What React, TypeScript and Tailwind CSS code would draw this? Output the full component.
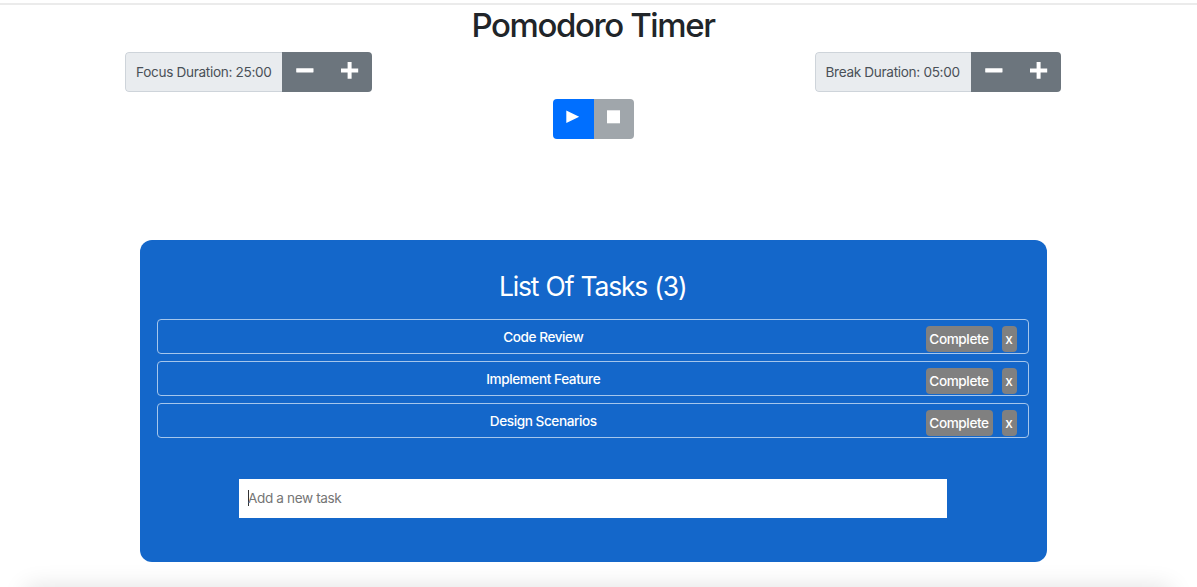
import React from "react";

type DurationProps = { label: string; width: string };

function Duration({ label, width }: DurationProps) {
  return (
    <div className={`flex h-[40.5px] overflow-hidden rounded-[4px] ${width}`}>
      <div className="flex flex-1 items-center rounded-l-[4px] border border-r-0 border-[#ced4da] bg-[#e9ecef] pl-[10px] text-[13.6px] tracking-[-0.32px] whitespace-nowrap text-[#495057]">
        {label}
      </div>
      <div className="flex w-[90px] bg-[#6c757d] text-white">
        <button aria-label="Decrease" className="flex w-[45px] pt-[10px] pl-[14px]">
          <svg width="18" height="18" viewBox="0 0 18 18" fill="currentColor">
            <rect x="0.2" y="6.2" width="17.3" height="4.3" rx="0.4" />
          </svg>
        </button>
        <button aria-label="Increase" className="flex w-[45px] pt-[10px] pl-[14px]">
          <svg width="18" height="18" viewBox="0 0 18 18" fill="currentColor">
            <path d="M6.6 0h4v6.4H17.2v4H10.6v6.4h-4v-6.4H0v-4H6.6z" />
          </svg>
        </button>
      </div>
    </div>
  );
}

function Task({ name }: { name: string }) {
  return (
    <li className="flex h-[35px] rounded-[4px] border border-[#a5c6ec] pr-[11px] text-[13.6px] font-[450] text-white">
      <span className="flex-1 pt-[7px] pl-[3px] text-center leading-5 tracking-[-0.43px]">{name}</span>
      <div className="flex gap-[9px] pt-[6px]">
        <button className="h-[26px] w-[67px] rounded-[4px] bg-[#808080] text-center tracking-[-0.4px]">
          Complete
        </button>
        <button className="h-[26px] w-[15px] rounded-[4px] bg-[#808080] text-center">x</button>
      </div>
    </li>
  );
}

export default function App() {
  const tasks = ["Code Review", "Implement Feature", "Design Scenarios"];
  return (
    <div className="relative flex h-[587px] w-full flex-col overflow-hidden bg-white font-['Inter','Liberation_Sans',sans-serif]">
      <div className="h-[5px] shrink-0 border-b-2 border-[#ebebeb]" />
      <main className="flex w-[1186px] flex-col">
        <h1 className="h-[46.5px] text-center text-[33px] leading-[41px] font-[550] tracking-[-1.4px] text-[#212529]">
          Pomodoro Timer
        </h1>
        <div className="flex justify-between pr-[125.5px] pl-[125px]">
          <Duration label="Focus Duration: 25:00" width="w-[247px]" />
          <Duration label="Break Duration: 05:00" width="w-[246px]" />
        </div>
        <div className="mt-[6.5px] ml-[553px] flex h-[40.5px] w-[81px] overflow-hidden rounded-[4px] text-white">
          <button aria-label="Play" className="flex w-[41px] bg-[#006fff] pt-[11.5px] pl-[13px]">
            <svg width="14" height="14" viewBox="0 0 14 14" fill="currentColor">
              <path d="M0.3 0.5L13.2 6.7L0.3 12.9z" />
            </svg>
          </button>
          <button aria-label="Stop" className="flex flex-1 bg-[#a0a6ab] pt-[11.5px] pl-[13px]">
            <svg width="14" height="14" viewBox="0 0 14 14" fill="currentColor">
              <rect width="13" height="13" y="0.3" />
            </svg>
          </button>
        </div>
        <section className="relative z-10 mt-[101px] ml-[140px] flex h-[322px] w-[906.5px] flex-col rounded-[12px] bg-[#1467ca] pr-[18px] pl-[17px]">
          <h2 className="h-[79px] pt-[29px] text-center text-[26.5px] leading-[34px] font-[430] tracking-[-1.2px] [word-spacing:1px] text-white">
            List Of Tasks (3)
          </h2>
          <ul className="flex flex-col gap-[7px]">
            {tasks.map((t) => (
              <Task key={t} name={t} />
            ))}
          </ul>
          <div className="mt-[41px] ml-[82px] flex h-[38.5px] w-[708px] items-center bg-white pl-[9px] text-[13.6px] tracking-[-0.38px] text-[#757575]">
            <span className="-mr-px h-4 w-px bg-[#333]" />
            <span>Add a new task</span>
          </div>
        </section>
      </main>
      <div className="absolute bottom-[-24px] left-[30px] h-5 w-[1137px] shadow-[0_0_24px_4px_rgba(0,0,0,0.12)]" />
    </div>
  );
}
